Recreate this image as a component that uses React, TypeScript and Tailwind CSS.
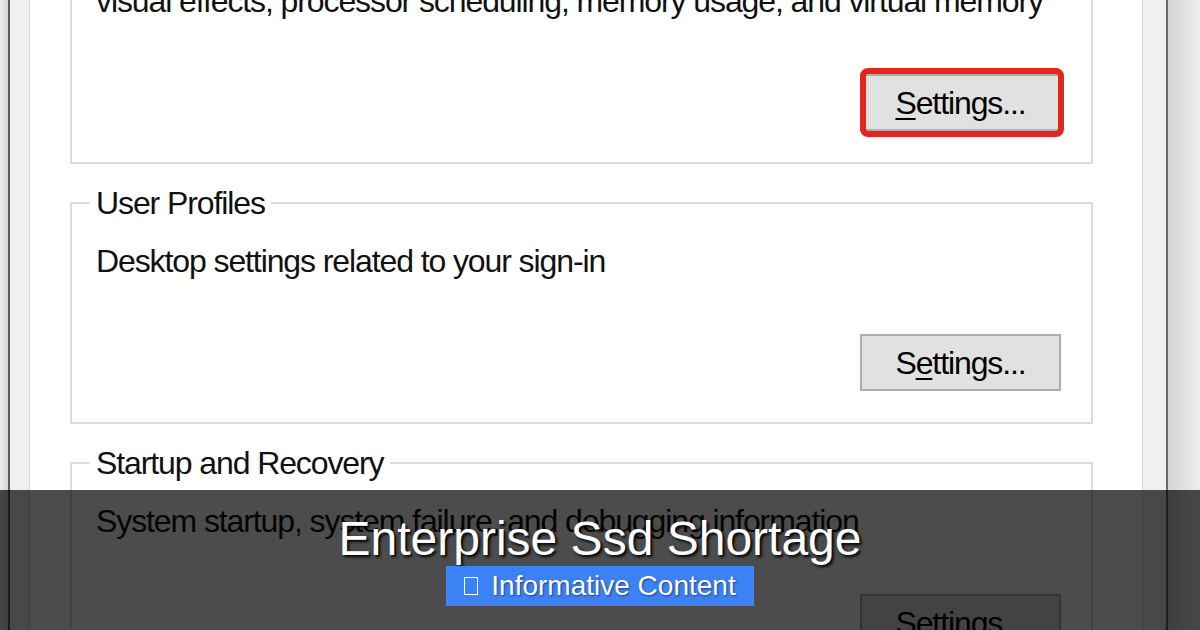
import React from "react";

interface GroupProps {
  title: string;
  text: string;
  label: [string, string, string];
  highlight?: boolean;
}

function GroupBox({ title, text, label, highlight }: GroupProps) {
  return (
    <fieldset className="border-2 border-[#dcdcdc] px-[18px] pb-[31px]">
      <legend className="px-[6px] leading-[34px]">{title}</legend>
      <div className="pl-[6px] pt-[24px] leading-[34px] whitespace-nowrap">{text}</div>
      <div className="mt-[56px] flex justify-end pr-[12px]">
        <div className="relative">
          <button className="flex h-[57px] w-[201px] items-center justify-center border-2 border-[#adadad] bg-[#e1e1e1] leading-[34px] text-black">
            {label[0]}
            <span className="underline decoration-2 underline-offset-[4px]">{label[1]}</span>
            {label[2]}
          </button>
          {/* red annotation round the button */}
          {highlight && (
            <div className="absolute -top-[6px] -bottom-[6px] left-0 -right-[3px] rounded-[8px] border-[6px] border-[#e3251d]" />
          )}
        </div>
      </div>
    </fieldset>
  );
}

export default function App() {
  return (
    <div className="relative h-[630px] w-[1200px] overflow-hidden bg-white font-['Liberation_Sans',Arial,sans-serif] text-[32px] tracking-[-1.1px] text-[#111]">
      <div className="flex h-full">
        {/* left window frame */}
        <div className="w-[8px] bg-gradient-to-r from-[#ececec] to-[#d6d6d6]" />
        <div className="w-[2px] bg-[#5c5c5c]" />
        <div className="w-[19px] bg-[#f0f0f0]" />
        <div className="w-[1px] bg-[#dadada]" />

        {/* tab page */}
        <div className="w-[1112px] bg-white pl-[40px] pr-[49px]">
          <div className="-mt-[74px] flex flex-col gap-[22px]">
            <GroupBox
              title="Performance"
              text="visual effects, processor scheduling, memory usage, and virtual memory"
              label={["", "S", "ettings..."]}
              highlight
            />
            <GroupBox
              title="User Profiles"
              text="Desktop settings related to your sign-in"
              label={["S", "e", "ttings..."]}
            />
            <GroupBox
              title="Startup and Recovery"
              text="System startup, system failure, and debugging information"
              label={["Se", "t", "tings..."]}
            />
          </div>
        </div>

        {/* right window frame */}
        <div className="w-[1px] bg-[#dadada]" />
        <div className="w-[23px] bg-[#f0f0f0]" />
        <div className="w-[2px] bg-[#6a6a6a]" />
        <div className="flex-1 bg-gradient-to-r from-[#d4d4d4] to-[#efefef]" />
      </div>

      {/* caption band */}
      <div className="absolute left-0 right-0 top-[490px] flex h-[140px] flex-col items-center justify-center bg-black/70 tracking-normal">
        <h1 className="text-[48px] leading-none text-white [text-shadow:2px_2px_3px_#000]">
          Enterprise Ssd Shortage
        </h1>
        <div className="mt-[3px] flex h-[40px] items-center gap-[13px] bg-[#3b82f6] px-[18px] text-[28px] leading-[40px] text-white [text-shadow:1px_1px_2px_rgba(0,0,0,0.5)]">
          <span className="inline-block h-[18px] w-[14px] border-[1.5px] border-white" />
          <span>Informative Content</span>
        </div>
      </div>
    </div>
  );
}
